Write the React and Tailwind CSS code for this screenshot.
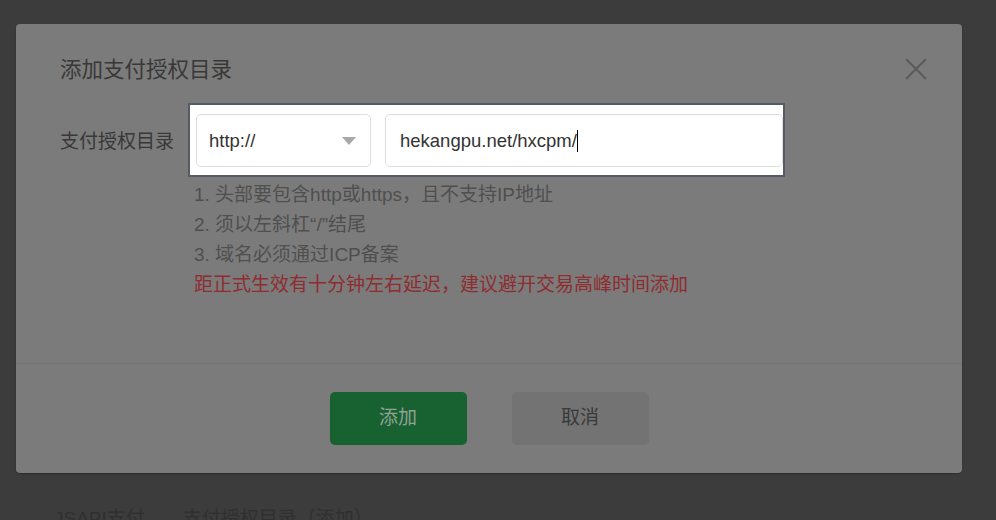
import React from "react";

const font = { fontFamily: '"Liberation Sans", "Noto Sans CJK SC", sans-serif' };

export default function App() {
  return (
    <div
      className="w-[996px] h-[520px] overflow-hidden bg-[#3c3c3c] pt-[24px] pl-[16px]"
      style={font}
    >
      <div className="w-[946px] h-[449px] rounded-[4px] bg-[#7b7b7b] shadow-[0_1px_2px_rgba(0,0,0,0.25)] flex flex-col">
        {/* header */}
        <div className="flex justify-between items-start pl-[44px] pr-[35px] pt-[31px]">
          <div className="text-[21.5px] leading-[30px] text-[#383838]">添加支付授权目录</div>
          <svg className="mt-[3px]" width="22" height="22" viewBox="0 0 22 22">
            <path d="M1 1 L21 21 M21 1 L1 21" stroke="#5a5a5a" strokeWidth="2" fill="none" />
          </svg>
        </div>

        {/* form row */}
        <div className="flex items-center pl-[44px] mt-[18px]">
          <div className="w-[128px] pt-[3px] text-[19px] leading-[30px] text-[#383838]">支付授权目录</div>
          <div className="w-[597px] border-2 border-[#545a66] bg-white pl-[6px] pt-[9px] pb-[8px] flex gap-[14px]">
            <div className="w-[175px] h-[53px] rounded-[5px] border border-[#dddddd] flex items-center justify-between pl-[12px] pr-[14px]">
              <span className="text-[18.5px] text-[#333]">http://</span>
              <svg width="14" height="8" viewBox="0 0 14 8">
                <path d="M0 0 L14 0 L7 8 Z" fill="#a8a8a8" />
              </svg>
            </div>
            <div className="w-[398px] h-[53px] rounded-[5px] border border-[#dddddd] flex items-center pl-[14px]">
              <span className="text-[18.5px] text-[#333]">hekangpu.net/hxcpm/</span>
              <span className="w-[1px] h-[22px] bg-black" />
            </div>
          </div>
        </div>

        {/* hints */}
        <div className="ml-[178px] text-[19px] leading-[30px] text-[#4f4f4f] mt-[3px]">
          <div>1. 头部要包含http或https，且不支持IP地址</div>
          <div>2. 须以左斜杠“/”结尾</div>
          <div>3. 域名必须通过ICP备案</div>
          <div className="text-[#8f2c2f]">距正式生效有十分钟左右延迟，建议避开交易高峰时间添加</div>
        </div>

        {/* divider + buttons */}
        <div className="mt-[63px] border-t border-[#737373] pt-[28px] flex justify-center gap-[45px]">
          <div className="w-[137px] h-[53px] rounded-[5px] bg-[#186130] flex items-center justify-center text-[19px] text-[#8fa395]">
            添加
          </div>
          <div className="w-[137px] h-[53px] rounded-[5px] bg-[#737373] flex items-center justify-center text-[19px] text-[#3a3a3a]">
            取消
          </div>
        </div>
      </div>

      <div className="ml-[38px] mt-[31px] text-[19px] leading-[30px] text-[#303030] whitespace-nowrap">
        JSAPI支付　　支付授权目录（添加）
      </div>
    </div>
  );
}
